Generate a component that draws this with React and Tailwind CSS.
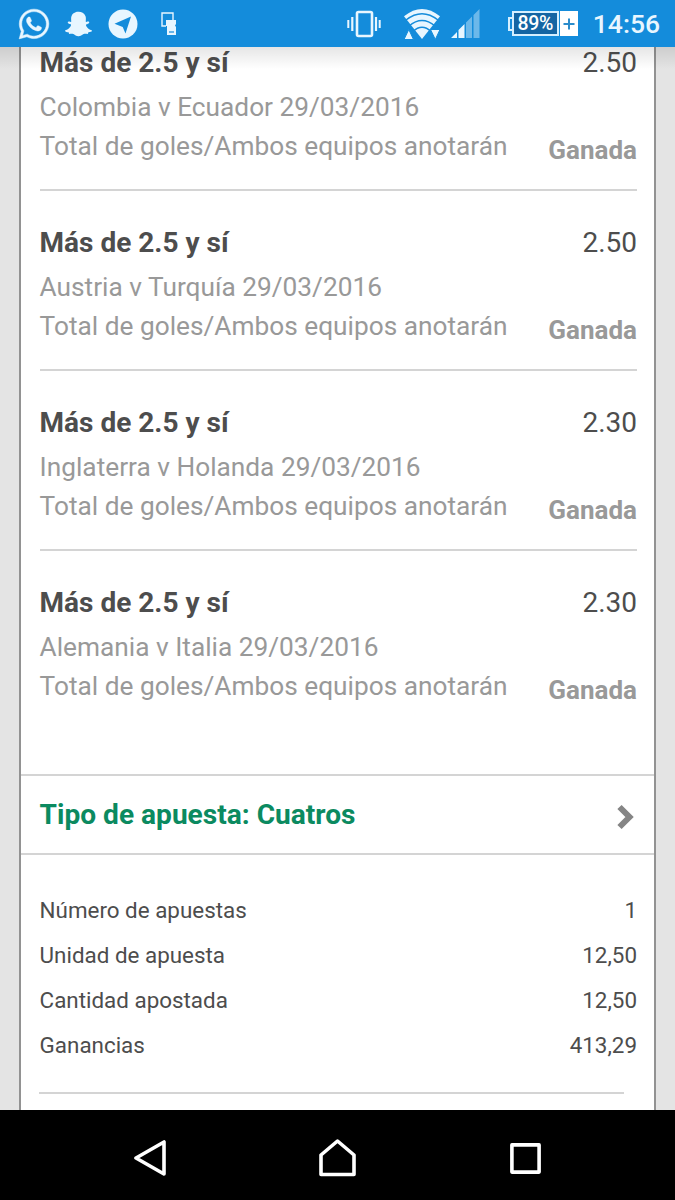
import { FaWhatsapp, FaSnapchatGhost } from "react-icons/fa"

const bets = [
  { id: 1, pick: "Más de 2.5 y sí", odds: "2.50", match: "Colombia v Ecuador 29/03/2016" },
  { id: 2, pick: "Más de 2.5 y sí", odds: "2.50", match: "Austria v Turquía 29/03/2016" },
  { id: 3, pick: "Más de 2.5 y sí", odds: "2.30", match: "Inglaterra v Holanda 29/03/2016" },
  { id: 4, pick: "Más de 2.5 y sí", odds: "2.30", match: "Alemania v Italia 29/03/2016" },
]

const summary = [
  { label: "Número de apuestas", value: "1" },
  { label: "Unidad de apuesta", value: "12,50" },
  { label: "Cantidad apostada", value: "12,50" },
  { label: "Ganancias", value: "413,29" },
]

function StatusBar() {
  return (
    <header className="flex h-[47px] shrink-0 items-center justify-between bg-[#148cdb] pr-[15px] pl-[17px] text-[#e8f6ff]">
      <div className="flex items-center">
        <FaWhatsapp className="size-[34px]" stroke="currentColor" strokeWidth="7" />
        <FaSnapchatGhost className="ml-[14px] h-[26px] w-[27px]" preserveAspectRatio="none" />
        <svg className="ml-[16px]" width="30" height="30" viewBox="0 0 30 30">
          <circle cx="15" cy="15" r="14.500" fill="currentColor" />
          <path d="M6.500 14.700L23 7.500 17.500 24.500l-2.800-6.500z" fill="#148cdb" />
        </svg>
        <svg className="ml-[23px]" width="16" height="24" viewBox="0 0 16 24" fill="none">
          <path d="M5 14H1V1h11v7" stroke="currentColor" strokeWidth="1.4" />
          <path d="M5 8h10v4l-1 1.500 1 1.500v8H6V14H5z" fill="currentColor" />
          <path d="M8 20h5" stroke="#148cdb" strokeWidth="1.2" />
        </svg>
      </div>

      <div className="flex items-center">
        <svg width="34" height="28" viewBox="0 0 34 28" fill="none" stroke="currentColor">
          <rect x="10" y="2" width="15" height="24" rx="1.5" strokeWidth="2.6" />
          <path d="M1.3 10v8M32.7 10v8" strokeWidth="2" />
          <path d="M5.3 7v14M29 7v14" strokeWidth="2.2" />
        </svg>
        <svg className="ml-[23px]" width="36" height="32" viewBox="0 0 36 32" fill="none">
          <path d="M0 8.300Q18 -6.500 36 8.300L18 31z" fill="currentColor" />
          <path d="M2 12Q18 -.5 34 12M5 18Q18 7 31 18M9 23.500Q18 15 27 23.500" stroke="#148cdb" strokeWidth="1.5" />
          <path d="M0 31.500h9.500l-4.700-10zM26.500 21.500H36l-4.700 10z" fill="currentColor" stroke="#148cdb" strokeWidth="1" />
        </svg>
        <svg className="ml-[11px]" width="29" height="30" viewBox="0 0 29 30" fill="currentColor">
          <path d="M0 29h6v-6zM7.500 29h6V15l-6 6z" />
          <path d="M15 29h6V7.500l-6 6zM22.500 29h6V0l-6 6z" opacity=".42" />
        </svg>
        <div className="ml-[28px] flex items-center">
          <div className="h-[14px] w-[4px] border-2 border-r-0 border-[#d5efff]" />
          <div className="flex h-[25px] w-[47px] items-center justify-center border-2 border-[#d5efff] bg-[#1465a3] text-[19.500px] font-medium tracking-[-0.4px] text-white">
            89%
          </div>
          <div className="ml-px flex h-[25px] w-[18px] items-center justify-center bg-white">
            <svg width="12" height="12" viewBox="0 0 12 12" stroke="#2b8ccb" strokeWidth="2">
              <path d="M6 .5v11M.5 6h11" />
            </svg>
          </div>
        </div>
        <span className="ml-[15px] text-[26.500px] font-medium">14:56</span>
      </div>
    </header>
  )
}

function BetRow({ bet, last }) {
  return (
    <div className={`h-[180px] pt-[32px] ${last ? "" : "border-b-2 border-[#d4d4d4]"}`}>
      <div className="mb-[5px] flex justify-between text-[28px] leading-[40px] text-[#4d4d4d]">
        <h2 className="font-bold">{bet.pick}</h2>
        <span>{bet.odds}</span>
      </div>
      <div className="flex items-end justify-between leading-[39px] text-[#999]">
        <div className="text-[26.260px]">
          <p>{bet.match}</p>
          <p>Total de goles/Ambos equipos anotarán</p>
        </div>
        <span className="-mb-[4px] text-[26px] font-bold">Ganada</span>
      </div>
    </div>
  )
}

function NavBar() {
  return (
    <nav className="flex h-[90px] shrink-0 items-center bg-black pt-[6px] pl-[134px]">
      <svg width="32" height="36" viewBox="0 0 32 36" fill="none" stroke="white" strokeWidth="3.600" strokeLinejoin="round">
        <path d="M2 18L30 2v32z" />
      </svg>
      <svg className="ml-[153px]" width="37" height="38" viewBox="0 0 37 38" fill="none" stroke="white" strokeWidth="3.600" strokeLinejoin="round">
        <path d="M2 35.500V16L18.500 2 35 16v19.500z" />
      </svg>
      <svg className="ml-[154px]" width="31" height="31" viewBox="0 0 31 31" fill="none" stroke="white" strokeWidth="3.600" strokeLinejoin="round">
        <path d="M1.900 1.900h27.200v27.200H1.900z" />
      </svg>
    </nav>
  )
}

export default function App() {
  return (
    <div className="flex h-[1200px] w-[675px] flex-col overflow-hidden bg-[#e4e4e4] font-['Roboto',sans-serif]">
      <StatusBar />

      <div className="relative min-h-0 flex-1 overflow-hidden">
        <main className="mx-[19px] flow-root h-full border-x-2 border-[#929292] bg-white">
          <section className="-mt-[36px] pr-[17px] pl-[18.600px]">
            {bets.map((bet, index) => (
              <BetRow key={bet.id} bet={bet} last={index === bets.length - 1} />
            ))}
          </section>

          <button className="mt-[43px] flex h-[81px] w-full items-center justify-between border-y-2 border-[#d4d4d4] pt-px pr-[19px] pl-[18.600px] text-[28.100px] font-bold text-[#0b8a60]">
            Tipo de apuesta: Cuatros
            <svg className="mt-[4px]" width="18" height="26" viewBox="0 0 18 26" fill="none" stroke="#858585" strokeWidth="6">
              <path d="M2.500 3L12.500 13 2.500 23" />
            </svg>
          </button>

          <dl className="mt-[33px] pr-[17px] pl-[18.600px] text-[22.400px] leading-[45px] text-[#4d4d4d]">
            {summary.map((item) => (
              <div key={item.label} className="flex justify-between">
                <dt>{item.label}</dt>
                <dd>{item.value}</dd>
              </div>
            ))}
          </dl>
          <hr className="mt-[24px] mr-[30px] ml-[18px] border-t-2 border-[#d4d4d4]" />
        </main>

        {/* header shadow over the scrolled content */}
        <div className="pointer-events-none absolute inset-x-0 top-0 h-[22px] bg-linear-to-b from-black/10 to-transparent" />
      </div>

      <NavBar />
    </div>
  )
}
